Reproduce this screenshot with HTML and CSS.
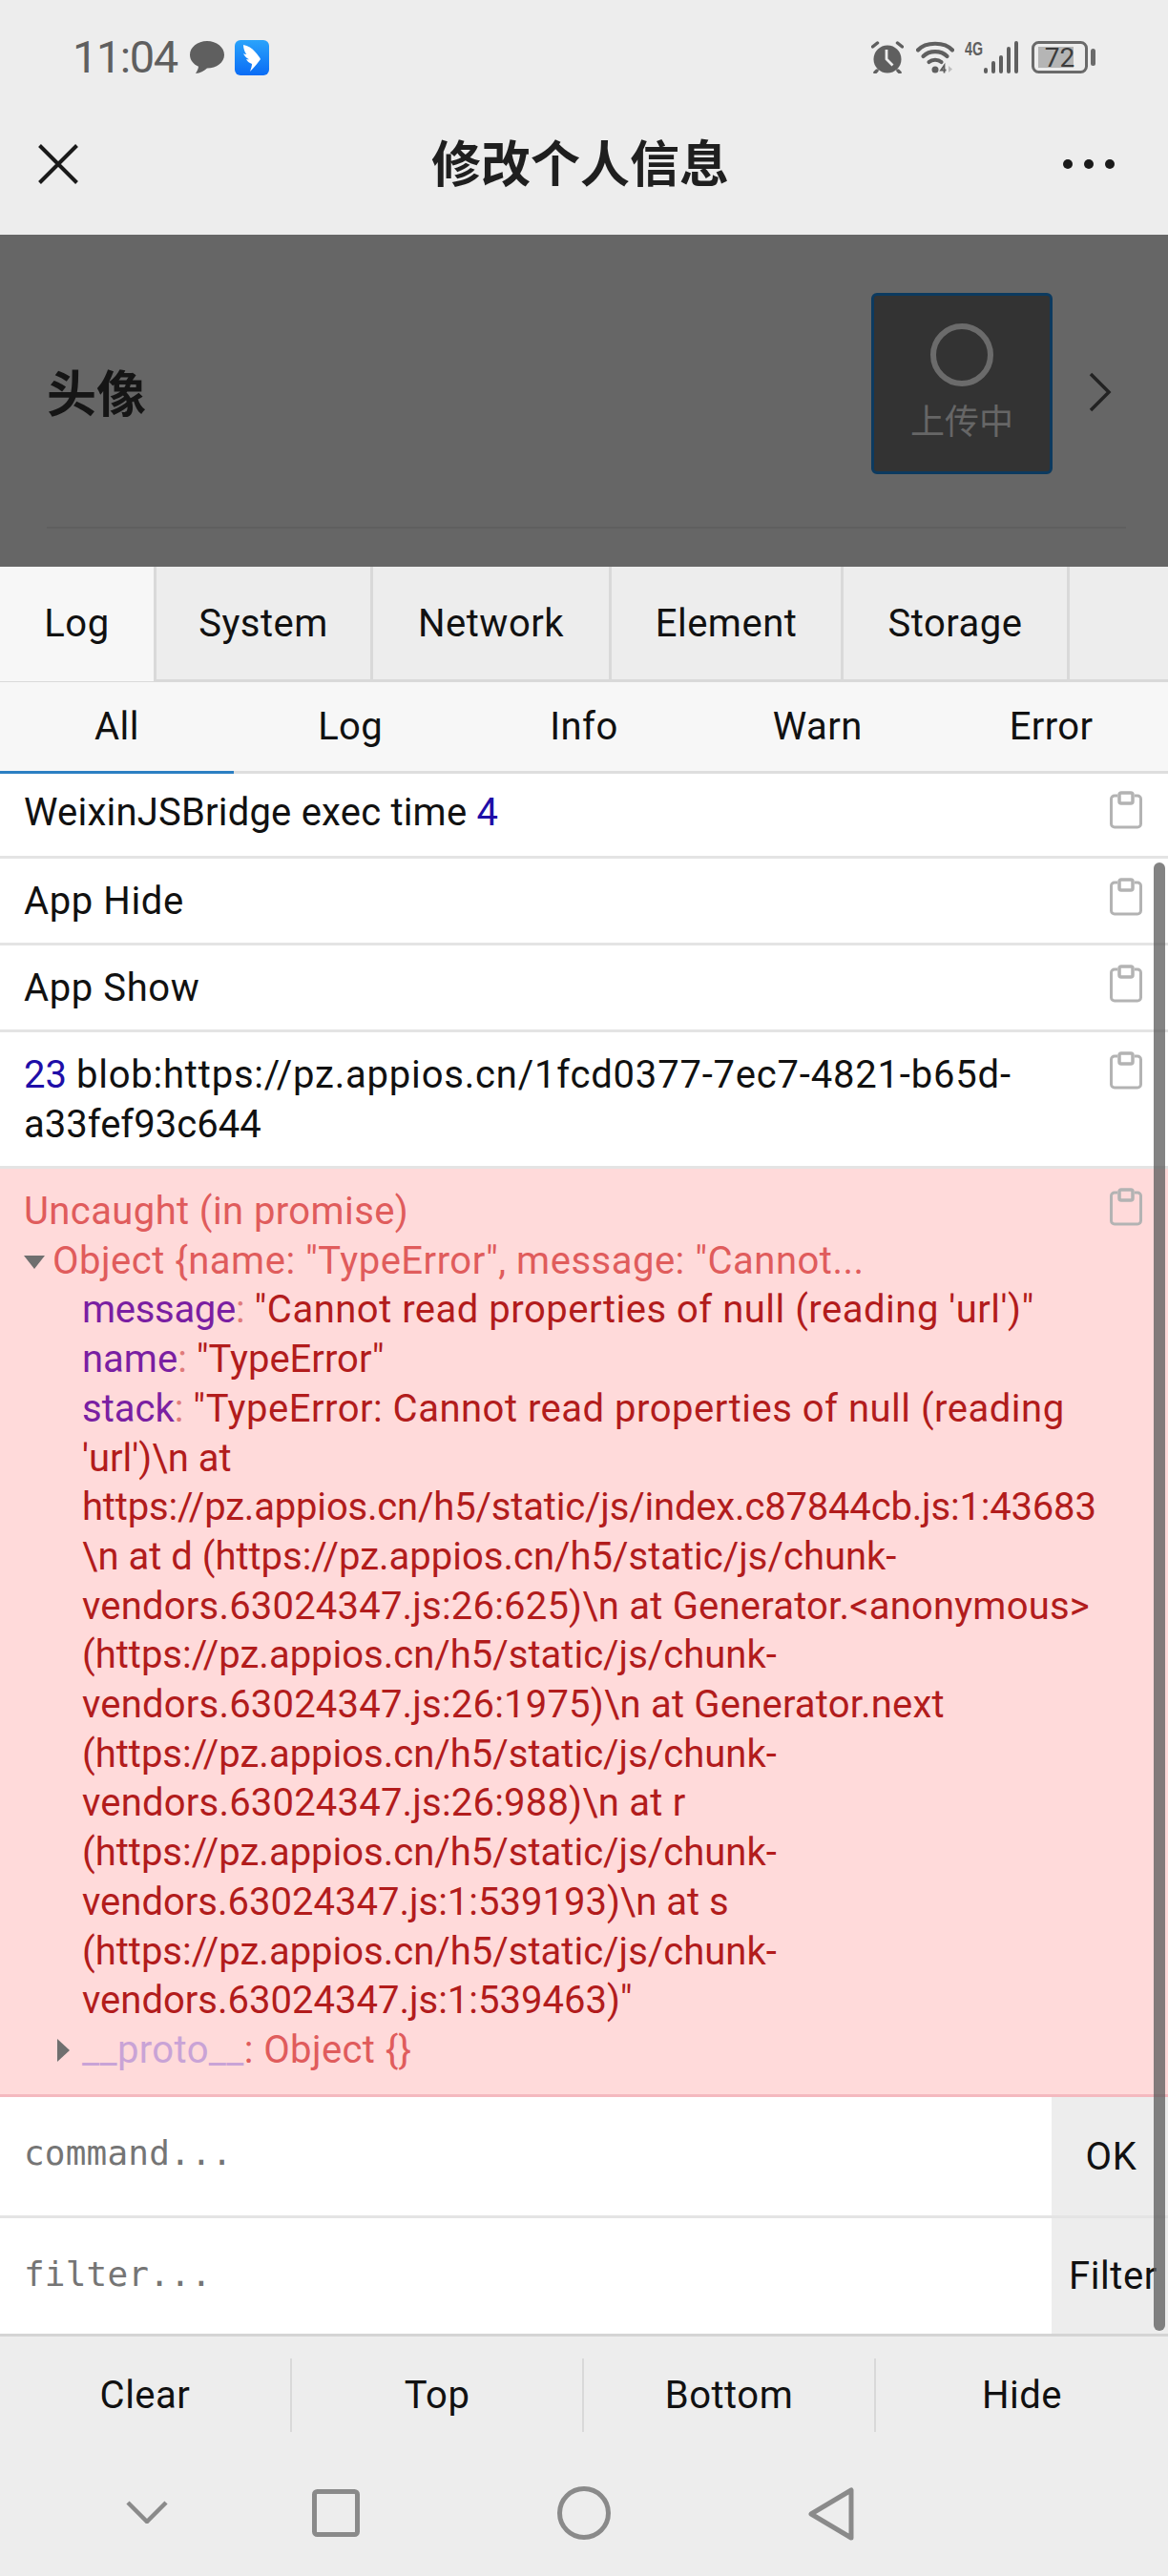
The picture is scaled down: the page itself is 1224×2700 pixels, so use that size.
FILE: index.html
```html
<!DOCTYPE html>
<html lang="zh">
<head>
<meta charset="utf-8">
<link rel="stylesheet" href="styles.css">
</head>
<body>
<div class="screen">
  <header class="chrome">
    <div class="status">
      <div class="status-left">
        <span class="time">11:04</span>
        <svg class="ic-bubble" viewBox="0 0 36 36"><path d="M18 1C8 1 0 7.500 0 15.500 0 21 3.800 25.500 9 27.800 8.700 30.500 7.500 33 6 35c4.500-.3 9-2.700 12-5.500 10 0 18-6 18-14C36 7.500 28 1 18 1z"/></svg>
        <svg class="ic-app" viewBox="0 0 36 37"><defs><linearGradient id="appg" x1="0" y1="0" x2="0" y2="1"><stop offset="0" stop-color="#2aa3fb"/><stop offset="1" stop-color="#0a6cf5"/></linearGradient></defs><rect width="36" height="37" rx="6" fill="url(#appg)"/><path d="M9 5c5 1 9 3.500 12 7 3 3 5 6 6 8-2 3-6 8-11 13 1-3 2-6 2-8-3-1-5-3-6-5 1 .3 2 .4 3 .3-3-1.500-5-4-6-6 1 .5 2.300.8 3.300.8C10 12 9 8 9 5z" fill="#fff"/></svg>
      </div>
      <div class="status-right">
        <svg class="ic-alarm" viewBox="0 0 34 34"><circle cx="17" cy="19" r="14.500" fill="#5f5f5f"/><path d="M1.500 6l5-4M32.500 6l-5-4M6 31l-2 2M28 31l2 2" stroke="#5f5f5f" stroke-width="3.500" stroke-linecap="round" fill="none"/><path d="M16 9v10l6.500 6.500" stroke="#ededed" stroke-width="2.800" fill="none"/></svg>
        <svg class="ic-wifi" viewBox="0 0 40 34"><g fill="none" stroke="#5f5f5f" stroke-width="4.200" stroke-linecap="round"><path d="M2 9.500C10 .5 30 .5 38 9.500"/><path d="M7.500 16c6.500-6.500 18.500-6.500 25 0"/><path d="M13.500 22c3.500-3 9.500-3 13 0"/></g><circle cx="20" cy="30" r="3.500" fill="#5f5f5f"/><path d="M29.500 33.500v-8l-3.500 5h5.500" stroke="#5f5f5f" stroke-width="1.800" fill="none"/><path d="M34 26v7l4-3.500z" fill="#bdbdbd"/></svg>
        <svg class="ic-signal" viewBox="0 0 57 34"><text class="net" x="0" y="15" textLength="19" lengthAdjust="spacingAndGlyphs">4G</text><g stroke="#5f5f5f" stroke-width="4" stroke-linecap="round"><path d="M22 32v-2M30 32v-9M38 32V17M46 32V8M54 32V2"/></g></svg>
        <svg class="ic-batt" viewBox="0 0 67 34"><rect x="1.500" y="1.500" width="56" height="31" rx="6" fill="none" stroke="#6a6a6a" stroke-width="3"/><rect x="7" y="6" width="37" height="22" fill="#b5b5b5"/><text class="batt-num" x="29.500" y="27" text-anchor="middle">72</text><rect x="62" y="8" width="5" height="18" rx="2.500" fill="#6a6a6a"/></svg>
      </div>
    </div>
    <div class="navbar">
      <svg class="ic-close" viewBox="0 0 42 42"><path d="M1.500 1.500l39 39M40.500 1.500l-39 39" stroke="#1a1a1a" stroke-width="4" fill="none"/></svg>
      <h1 class="title">修改个人信息</h1>
      <div class="dots"><i></i><i></i><i></i></div>
    </div>
  </header>

  <section class="dimmed">
    <div class="avatar-row">
      <span class="avatar-label">头像</span>
      <div class="upload">
        <span class="spinner"></span>
        <span class="upload-text">上传中</span>
      </div>
      <svg class="ic-chev" viewBox="0 0 24 42"><path d="M2 2l19 19L2 40" fill="none" stroke="#222" stroke-width="3.500"/></svg>
    </div>
    <div class="dim-line"></div>
  </section>

  <nav class="tabs">
    <span class="tab active">Log</span>
    <span class="tab">System</span>
    <span class="tab">Network</span>
    <span class="tab">Element</span>
    <span class="tab">Storage</span>
  </nav>
  <nav class="subtabs">
    <span class="subtab active">All</span>
    <span class="subtab">Log</span>
    <span class="subtab">Info</span>
    <span class="subtab">Warn</span>
    <span class="subtab">Error</span>
  </nav>

  <main class="logs">
    <div class="row first">
      <div class="msg ls2">WeixinJSBridge exec time <span class="num">4</span></div>
      <svg class="ic-copy" viewBox="0 0 34 40"><use href="#copy"/></svg>
    </div>
    <div class="row">
      <div class="msg ls6">App Hide</div>
      <svg class="ic-copy" viewBox="0 0 34 40"><use href="#copy"/></svg>
    </div>
    <div class="row">
      <div class="msg ls6">App Show</div>
      <svg class="ic-copy" viewBox="0 0 34 40"><use href="#copy"/></svg>
    </div>
    <div class="row">
      <div class="msg"><span class="num">23</span> <span class="ls8">blob:https://pz.appios.cn/1fcd0377-7ec7-4821-b65d-</span><br>a33fef93c644</div>
      <svg class="ic-copy" viewBox="0 0 34 40"><use href="#copy"/></svg>
    </div>
    <div class="row error">
      <div class="msg">
        <div class="ls4">Uncaught (in promise)</div>
        <div class="obj ls5"><span class="tri-down"></span>Object {name: "TypeError", message: "Cannot...</div>
        <div class="props">
          <div><span class="key lsm">message</span><span class="colon">:</span> <span class="val ls5">"Cannot read properties of null (reading 'url')"</span></div>
          <div><span class="key">name</span><span class="colon">:</span> <span class="val">"TypeError"</span></div>
          <div><span class="key">stack</span><span class="colon">:</span> <span class="val"><span class="ls5">"TypeError: Cannot read properties of null (reading</span><br>'url')\n at<br><span class="lsn">https://pz.appios.cn/h5/static/js/index.c87844cb.js:1:43683</span><br>\n at d (https://pz.appios.cn/h5/static/js/chunk-<br><span class="ls2">vendors.63024347.js:26:625)\n at Generator.&lt;anonymous&gt;</span><br>(https://pz.appios.cn/h5/static/js/chunk-<br><span class="ls2">vendors.63024347.js:26:1975)\n at Generator.next</span><br>(https://pz.appios.cn/h5/static/js/chunk-<br><span class="ls2">vendors.63024347.js:26:988)\n at r</span><br>(https://pz.appios.cn/h5/static/js/chunk-<br>vendors.63024347.js:1:539193)\n at s<br>(https://pz.appios.cn/h5/static/js/chunk-<br>vendors.63024347.js:1:539463)"</span></div>
          <div class="proto ls4"><span class="tri-right"></span><span class="key-dim">__proto__</span>: Object {}</div>
        </div>
      </div>
      <svg class="ic-copy" viewBox="0 0 34 40"><use href="#copy"/></svg>
    </div>
  </main>

  <div class="cmd">
    <span class="placeholder">command...</span>
    <span class="cmd-btn">OK</span>
  </div>
  <div class="cmd last">
    <span class="placeholder">filter...</span>
    <span class="cmd-btn">Filter</span>
  </div>

  <div class="toolbar">
    <span class="tool">Clear</span>
    <span class="tool">Top</span>
    <span class="tool">Bottom</span>
    <span class="tool">Hide</span>
  </div>

  <footer class="sysnav">
    <svg class="ic-down" viewBox="0 0 44 24"><path d="M2 2l20 20L42 2" fill="none" stroke="#8a8a8a" stroke-width="4.500"/></svg>
    <svg class="ic-square" viewBox="0 0 50 50"><rect x="2.500" y="2.500" width="45" height="45" rx="3" fill="none" stroke="#8a8a8a" stroke-width="5"/></svg>
    <svg class="ic-circle" viewBox="0 0 56 56"><circle cx="28" cy="28" r="25.500" fill="none" stroke="#8a8a8a" stroke-width="5"/></svg>
    <svg class="ic-back" viewBox="0 0 48 56"><path d="M45 3v50L3 28z" fill="none" stroke="#8a8a8a" stroke-width="5" stroke-linejoin="round"/></svg>
  </footer>

  <div class="scrollbar"></div>

  <svg class="defs" width="0" height="0"><defs><g id="copy"><path d="M8 5H5a3.500 3.500 0 0 0-3.500 3.500v26A3.500 3.500 0 0 0 5 38h24a3.500 3.500 0 0 0 3.500-3.500v-26A3.500 3.500 0 0 0 29 5h-3" fill="none" stroke="#b3b3b3" stroke-width="3"/><rect x="10" y="2" width="14" height="11" rx="2" fill="none" stroke="#b3b3b3" stroke-width="3.500"/></g></defs></svg>
</div>
</body>
</html>
```

FILE: styles.css
```css
* { box-sizing: border-box; }
html, body { margin: 0; padding: 0; }
body { background: #ededed; font-family: Roboto, "Noto Sans CJK SC", sans-serif; color: #111; }
.screen { position: relative; width: 1224px; height: 2700px; overflow: hidden; }
svg { display: block; flex: none; }
.defs { position: absolute; }

.ls2 { letter-spacing: .2px; }
.ls4 { letter-spacing: .4px; }
.ls5 { letter-spacing: .5px; }
.ls6 { letter-spacing: .6px; }
.ls8 { letter-spacing: .8px; }
.lsn { letter-spacing: -.18px; }
.lsm { letter-spacing: -.3px; }

.chrome { height: 246px; background: #ededed; }
.status { height: 120px; padding: 0 76px; display: flex; justify-content: space-between; align-items: center; }
.status-left { display: flex; align-items: center; }
.time { font-size: 47px; line-height: 60px; color: #5f5f5f; width: 123px; letter-spacing: -1.5px; }
.ic-bubble { width: 36px; height: 36px; fill: #5f5f5f; margin-right: 11px; }
.ic-app { width: 36px; height: 37px; }
.status-right { display: flex; align-items: center; gap: 13px; }
.ic-alarm { width: 34px; height: 34px; }
.ic-wifi { width: 40px; height: 34px; margin-right: -2px; }
.ic-signal { width: 57px; height: 34px; }
.ic-batt { width: 67px; height: 34px; }
.net { font: bold 20px "Liberation Sans", sans-serif; fill: #5f5f5f; }
.batt-num { font: 28px Roboto, sans-serif; fill: #3c3c3c; }

.navbar { height: 104px; padding: 0 56px 6px 40px; display: flex; align-items: center; justify-content: space-between; }
.ic-close { width: 42px; height: 42px; margin-top: 6px; }
.title { margin: 0 0 0 20px; font-size: 52px; line-height: 60px; font-weight: 700; color: #1f1f1f; font-family: "Noto Sans CJK SC", sans-serif; }
.dots { display: flex; gap: 12px; margin-top: 6px; }
.dots i { width: 10px; height: 10px; border-radius: 50%; background: #1a1a1a; }

.dimmed { height: 348px; background: #666; padding: 61px 44px 0 49px; }
.avatar-row { height: 190px; display: flex; align-items: center; }
.avatar-label { flex: 1; font-size: 52px; line-height: 60px; font-weight: 700; color: #151515; padding-top: 16px; font-family: "Noto Sans CJK SC", sans-serif; }
.upload { width: 190px; height: 190px; background: #333; border: 3px solid #0c3a5f; border-radius: 6px; display: flex; flex-direction: column; align-items: center; padding-top: 29px; }
.spinner { width: 66px; height: 66px; border: 6px solid #6b6b6b; border-radius: 50%; }
.upload-text { margin-top: 11px; font-size: 36px; line-height: 46px; color: #666; font-family: "Noto Sans CJK SC", sans-serif; }
.ic-chev { width: 24px; height: 42px; margin: 18px 15px 0 38px; }
.dim-line { margin-top: 55px; height: 2px; background: #5f5f5f; }

.tabs { height: 121px; display: grid; grid-template-columns: 164px 227px 250px 243px 237px; background: #ededed; border-bottom: 3px solid #d9d9d9; }
.tab { border-right: 3px solid #d9d9d9; text-align: center; font-size: 40px; letter-spacing: .5px; line-height: 120px; color: #111; }
.tab.active { background: #f7f7f7; }
.subtabs { height: 96px; display: grid; grid-template-columns: repeat(5, 1fr); background: #f7f7f7; border-bottom: 3px solid #dedede; }
.subtab { text-align: center; font-size: 40px; letter-spacing: .4px; line-height: 93px; height: 96px; }
.subtab.active { border-bottom: 3px solid #2b7fc3; }

.logs { background: #fff; }
.row { display: flex; justify-content: space-between; align-items: flex-start; padding: 19px 27px 17px 25px; border-bottom: 3px solid #e4e4e4; background: #fff; font-size: 40px; line-height: 52px; }
.row.first { padding-top: 15px; padding-bottom: 19px; }
.ic-copy { width: 34px; height: 40px; margin-top: 1px; }
.row.first .ic-copy { margin-top: 3px; }
.num { color: #1e0ea8; }
.row.error { background: #ffdada; border-bottom-color: #f4b9bf; color: #e05c5c; padding-top: 19px; padding-bottom: 20px; line-height: 51.7px; }
.obj { position: relative; padding-left: 30px; }
.tri-down { position: absolute; left: 0; top: 20px; width: 0; height: 0; border-left: 11px solid transparent; border-right: 11px solid transparent; border-top: 14px solid #6f6f6f; }
.props { padding-left: 61px; }
.key { color: #7a1fa2; }
.colon { color: #e07b7b; }
.val { color: #b21c1c; white-space: nowrap; }
.proto { position: relative; }
.tri-right { position: absolute; left: -26px; top: 14px; width: 0; height: 0; border-top: 12px solid transparent; border-bottom: 12px solid transparent; border-left: 13px solid #6f6f6f; }
.key-dim { color: #c9a3d6; }

.cmd { height: 127px; display: flex; background: #fff; border-bottom: 3px solid #e4e4e4; }
.cmd.last { height: 124px; border-bottom-color: #d4d4d4; }
.placeholder { flex: 1; padding: 0 0 0 25px; font: 36px/118px "DejaVu Sans Mono", monospace; letter-spacing: .2px; color: #757575; }
.cmd-btn { width: 122px; padding-left: 3px; background: #ededed; text-align: center; font-size: 40px; letter-spacing: .6px; line-height: 126px; color: #111; white-space: nowrap; }
.cmd.last .cmd-btn { line-height: 122px; padding-left: 7px; }

.toolbar { height: 120px; padding: 23px 0 0; display: grid; grid-template-columns: repeat(4, 306px); align-items: start; }
.tool { height: 77px; text-align: center; font-size: 40px; letter-spacing: .5px; line-height: 77px; color: #111; border-right: 2px solid #d9d9d9; }
.tool:last-child { border-right: 0; }

.sysnav { position: relative; height: 133px; }
.ic-down, .ic-square, .ic-circle, .ic-back { position: absolute; }
.ic-down { left: 132px; top: 52px; width: 44px; height: 24px; }
.ic-square { left: 327px; top: 40px; width: 50px; height: 50px; }
.ic-circle { left: 584px; top: 37px; width: 56px; height: 56px; }
.ic-back { left: 847px; top: 38px; width: 48px; height: 56px; }

.scrollbar { position: absolute; left: 1209px; top: 904px; width: 12px; height: 1539px; border-radius: 6px; background: rgba(90, 90, 90, .75); }
```
